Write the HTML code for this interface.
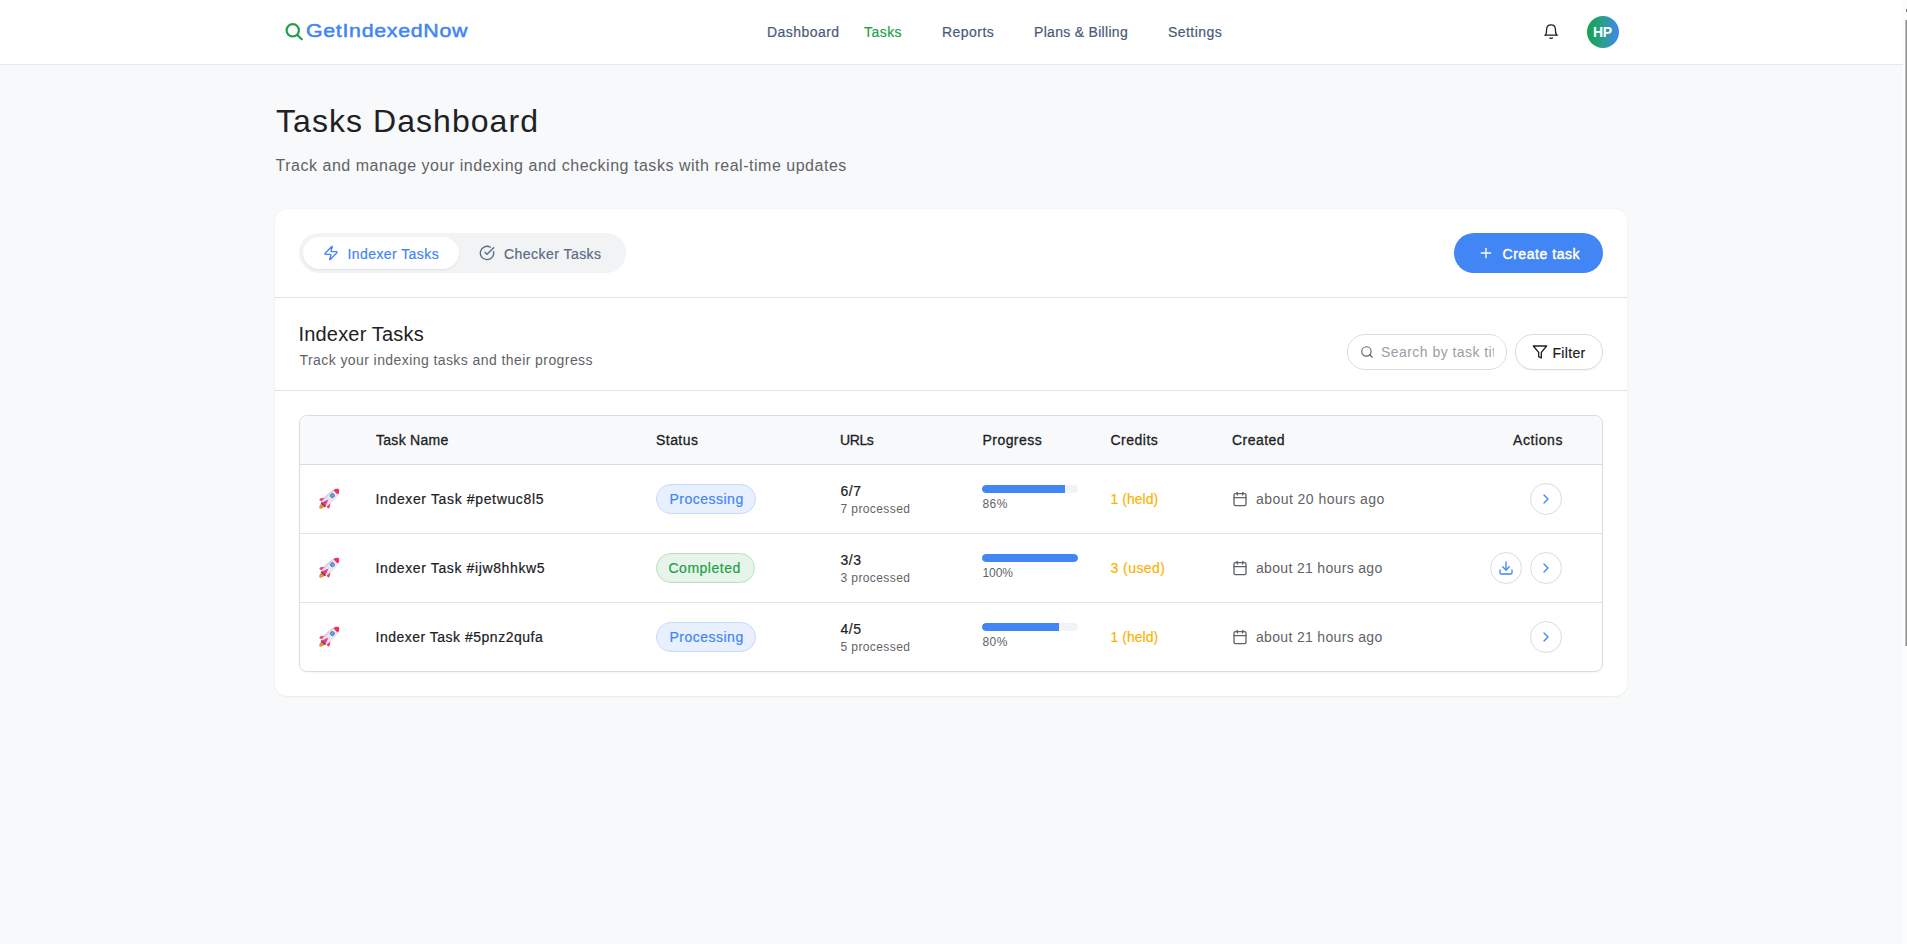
<!DOCTYPE html>
<html><head><meta charset="utf-8">
<style>
*{box-sizing:border-box;margin:0;padding:0}
html,body{width:1907px;height:944px;overflow:hidden}
body{background:#f8f9fa;font-family:"Liberation Sans",sans-serif;position:relative;color:#202124}
.a{position:absolute;white-space:nowrap;line-height:1}
svg{position:absolute;overflow:visible}
.med{-webkit-text-stroke:0.2px currentColor}
#hdr{position:absolute;left:0;top:0;width:1903px;height:65px;background:#fff;border-bottom:1px solid #e3e8ef}
.nav{font-size:14px;color:#4a5a78;top:25px;letter-spacing:0.45px}
#sbt{position:absolute;left:1903px;top:0;width:4px;height:944px;background:#fcfcfc}
#sbth{position:absolute;left:1905px;top:20px;width:2px;height:626px;background:linear-gradient(90deg,#d4d4d4,#7c7c7c)}
#sbdot{position:absolute;left:1906px;top:9px;width:1px;height:3px;background:#777}
#card{position:absolute;left:275px;top:209px;width:1352px;height:487px;background:#fff;border-radius:12px;box-shadow:0 1px 2px rgba(60,64,67,.06),0 0 0 0.5px rgba(60,64,67,.04)}
.hr{position:absolute;left:275px;width:1352px;height:1px;background:#dfe1e5}
#tabs{position:absolute;left:299px;top:233px;width:327px;height:40px;background:#f1f3f4;border-radius:20px}
#tab1{position:absolute;left:303px;top:237px;width:156px;height:32px;background:#fff;border-radius:16px;box-shadow:0 1px 2px rgba(0,0,0,.08)}
#create{position:absolute;left:1454px;top:233px;width:149px;height:40px;background:#4285f4;border-radius:20px}
.pill{position:absolute;top:334px;height:36px;border:1px solid #dadce0;border-radius:18px;background:#fff}
#tbl{position:absolute;left:299px;top:415px;width:1304px;height:257px;border:1px solid #dadce0;border-radius:8px;background:#fff;overflow:hidden;box-shadow:0 1px 2px rgba(0,0,0,.04)}
#thead{position:absolute;left:0;top:0;width:100%;height:49px;background:#f8f9fa;border-bottom:1px solid #dadce0}
.rowline{position:absolute;left:0;width:100%;height:1px;background:#e0e2e6}
.th{font-size:14px;top:433px;color:#202124;letter-spacing:0.45px;-webkit-text-stroke:0.3px #202124}
.cell{font-size:14px;color:#202124;letter-spacing:0.5px}
.sub{font-size:12px;color:#5f6368;letter-spacing:0.4px}
.badge{position:absolute;height:30px;border-radius:15px;border:1px solid}
.bar{position:absolute;left:982px;width:96px;height:8px;border-radius:4px;background:#f1f3f4;overflow:hidden}
.bar i{position:absolute;left:0;top:0;height:8px;background:#4285f4;border-radius:4px 0 0 4px}
.cred{font-size:14px;color:#fab300;letter-spacing:0.02px}
.date{font-size:14px;color:#5f6368;letter-spacing:0.45px}
.cbtn{position:absolute;width:32px;height:32px;border-radius:16px;border:1px solid #dadce0;background:#fff}
</style></head><body>
<div id="hdr"></div>
<!-- logo -->
<svg style="left:283.5px;top:22px" width="20" height="20" viewBox="0 0 24 24" fill="none" stroke="#1f9d48" stroke-width="2.6" stroke-linecap="round"><circle cx="10.5" cy="10" r="7.4"/><path d="M16 15.6 21.3 20.8"/></svg>
<div class="a" style="left:305.5px;top:21px;font-size:19px;color:#4285f4;letter-spacing:0.6px;transform:scaleX(1.125);transform-origin:0 0;-webkit-text-stroke:0.5px #4285f4">GetIndexedNow</div>
<div class="a nav med" style="left:767px">Dashboard</div>
<div class="a nav med" style="left:864px;color:#21a34a">Tasks</div>
<div class="a nav med" style="left:942px">Reports</div>
<div class="a nav med" style="left:1034px;letter-spacing:0.3px">Plans &amp; Billing</div>
<div class="a nav med" style="left:1168px">Settings</div>
<!-- bell -->
<svg style="left:1540px;top:20px" width="22" height="22" viewBox="0 0 22 22" fill="none" stroke="#202124" stroke-width="1.3" stroke-linecap="round" stroke-linejoin="round"><path d="M4.9 15.2H17.3"/><path d="M5.6 15.1C6.4 13.6 6.6 12 6.6 9.6 6.6 6.6 8.4 4.8 11.1 4.8 13.8 4.8 15.4 6.6 15.4 9.6 15.4 12 15.7 13.6 16.5 15.1"/><path d="M9.9 17.9Q11.1 18.9 12.4 17.9"/></svg>
<!-- avatar -->
<div style="position:absolute;left:1587px;top:16px;width:32px;height:32px;border-radius:16px;background:linear-gradient(90deg,#16a34a 0%,#2a9d8f 50%,#4285f4 100%)"></div>
<div class="a" style="left:1593px;top:25px;font-size:14px;font-weight:bold;color:#fff;letter-spacing:-0.3px">HP</div>

<!-- title -->
<div class="a" style="left:276px;top:105px;font-size:32px;color:#202124;letter-spacing:1.05px">Tasks Dashboard</div>
<div class="a" style="left:275.5px;top:158.3px;font-size:16px;color:#5f6368;letter-spacing:0.52px">Track and manage your indexing and checking tasks with real-time updates</div>

<div id="card"></div>
<div class="hr" style="top:297px"></div>
<div class="hr" style="top:390px"></div>

<div id="tabs"></div>
<div id="tab1"></div>
<svg style="left:323px;top:245px" width="16" height="16" viewBox="0 0 24 24" fill="none" stroke="#4285f4" stroke-width="2" stroke-linecap="round" stroke-linejoin="round"><path d="M4 14a1 1 0 0 1-.78-1.63l9.9-10.2a.5.5 0 0 1 .86.46l-1.92 6.02A1 1 0 0 0 13 10h7a1 1 0 0 1 .78 1.63l-9.9 10.2a.5.5 0 0 1-.86-.46l1.92-6.02A1 1 0 0 0 11 14z"/></svg>
<div class="a med" style="left:347.5px;top:247px;font-size:14px;color:#4285f4;letter-spacing:0.42px">Indexer Tasks</div>
<svg style="left:479px;top:245px" width="16" height="16" viewBox="0 0 24 24" fill="none" stroke="#5a6a85" stroke-width="2" stroke-linecap="round" stroke-linejoin="round"><path d="M21.801 10A10 10 0 1 1 17 3.335"/><path d="m9 11 3 3L22 4"/></svg>
<div class="a med" style="left:504px;top:247px;font-size:14px;color:#5a6a85;letter-spacing:0.46px">Checker Tasks</div>

<div id="create"></div>
<svg style="left:1478px;top:245px" width="16" height="16" viewBox="0 0 24 24" fill="none" stroke="#fff" stroke-width="2" stroke-linecap="round"><path d="M5 12h14"/><path d="M12 5v14"/></svg>
<div class="a" style="left:1502.5px;top:247px;font-size:14px;color:#fff;letter-spacing:0.55px;-webkit-text-stroke:0.45px #fff">Create task</div>

<!-- section header -->
<div class="a" style="left:298.5px;top:324px;font-size:20px;color:#202124;letter-spacing:0.18px">Indexer Tasks</div>
<div class="a" style="left:299.5px;top:353px;font-size:14px;color:#5f6368;letter-spacing:0.42px">Track your indexing tasks and their progress</div>

<div class="pill" style="left:1347px;width:160px;overflow:hidden">
<div class="a" style="left:33px;top:10px;font-size:14px;color:#9aa0a6;letter-spacing:0.45px">Search by task title</div>
<div style="position:absolute;left:146px;top:0;width:14px;height:34px;background:#fff"></div>
</div>
<svg style="left:1360px;top:345px" width="14" height="14" viewBox="0 0 24 24" fill="none" stroke="#5f6368" stroke-width="2" stroke-linecap="round"><circle cx="11" cy="11" r="8"/><path d="m21 21-4.3-4.3"/></svg>
<div class="pill" style="left:1515px;width:88px;box-shadow:0 1px 2px rgba(0,0,0,.05)"></div>
<svg style="left:1532px;top:344px" width="16" height="16" viewBox="0 0 24 24" fill="none" stroke="#202124" stroke-width="2" stroke-linecap="round" stroke-linejoin="round"><polygon points="22 3 2 3 10 12.46 10 19 14 21 14 12.46 22 3"/></svg>
<div class="a med" style="left:1552.5px;top:346px;font-size:14px;color:#202124;letter-spacing:0.32px">Filter</div>

<!-- table -->
<div id="tbl">
<div id="thead"></div>
<div class="rowline" style="top:117px"></div>
<div class="rowline" style="top:186px"></div>
</div>
<div class="a th med" style="left:376px;letter-spacing:0.28px">Task Name</div>
<div class="a th med" style="left:656px">Status</div>
<div class="a th med" style="left:840px;letter-spacing:-0.4px">URLs</div>
<div class="a th med" style="left:982.5px">Progress</div>
<div class="a th med" style="left:1110.5px;letter-spacing:0.5px">Credits</div>
<div class="a th med" style="left:1232px">Created</div>
<div class="a th med" style="left:1513px;letter-spacing:0.6px">Actions</div>

<!--ROWS-->
<svg style="left:319px;top:489px" width="20" height="20" viewBox="0 0 20 20"><g transform="rotate(45 10 10)">
<path d="M7.8 18.2C7.4 20.8 8.5 22.8 10 23.5 11.5 22.8 12.6 20.8 12.2 18.2Z" fill="#f28a2c"/>
<path d="M6.2 11.6 3.6 15.4C3.4 16 3.5 17 3.8 17.6L6.6 16.8Z" fill="#f0407a"/>
<path d="M13.8 11.6 16.4 15.4C16.6 16 16.5 17 16.2 17.6L13.4 16.8Z" fill="#f0407a"/>
<path d="M10 -3.8C12.6 -2.6 14.5 1.5 14.5 7 14.5 11.5 13.8 15.2 13 18.2H7C6.2 15.2 5.5 11.5 5.5 7 5.5 1.5 7.4 -2.6 10 -3.8Z" fill="#ebe5ef"/>
<path d="M10 -3.8C7.4 -2.6 5.5 1.5 5.5 7 5.5 11.5 6.2 15.2 7 18.2H8.4C7.6 15.2 7.1 11.5 7.1 7 7.1 1.5 8.3 -2 10 -3.8Z" fill="#d6cedd"/>
<path d="M10 -3.9C11.5 -3.3 12.6 -1.9 13.2 0.3 11.2 0.9 8.8 0.9 6.8 0.3 7.4 -1.9 8.5 -3.3 10 -3.9Z" fill="#f0304f"/>
<circle cx="10" cy="5.2" r="2" fill="#55acf7" stroke="#4a5590" stroke-width="0.7"/>
<path d="M10 10.8 12.9 18.4H7.1Z" fill="#ee3a78"/>
<path d="M7 17.6H13V18.8H7Z" fill="#3b3f8a"/>
</g></svg>
<div class="a cell med" style="left:375.5px;top:492px;letter-spacing:0.64px">Indexer Task #petwuc8l5</div>
<div class="badge" style="left:656px;top:484px;width:100px;background:#e8f0fe;border-color:#c6dafc"></div>
<div class="a med" style="left:669.5px;top:492px;font-size:14px;color:#4285f4;letter-spacing:0.49px">Processing</div>
<div class="a cell med" style="left:840.5px;top:484px">6/7</div>
<div class="a sub" style="left:840.5px;top:502.7px">7 processed</div>
<div class="bar" style="top:485px"><i style="width:83px;border-radius:4px 0 0 4px"></i></div>
<div class="a sub" style="left:982.5px;top:497.7px;letter-spacing:0.4px">86%</div>
<div class="a cred med" style="left:1110.5px;top:492px;letter-spacing:0.02px">1 (held)</div>
<svg style="left:1232px;top:491px" width="16" height="16" viewBox="0 0 24 24" fill="none" stroke="#5f6368" stroke-width="2" stroke-linecap="round" stroke-linejoin="round"><path d="M8 2v4"/><path d="M16 2v4"/><rect width="18" height="18" x="3" y="4" rx="2"/><path d="M3 10h18"/></svg>
<div class="a date" style="left:1256px;top:492px;letter-spacing:0.45px">about 20 hours ago</div>
<div class="cbtn" style="left:1530px;top:483px"></div>
<svg style="left:1538px;top:491px" width="16" height="16" viewBox="0 0 24 24" fill="none" stroke="#4285f4" stroke-width="2" stroke-linecap="round" stroke-linejoin="round"><path d="m9 18 6-6-6-6"/></svg>
<svg style="left:319px;top:558px" width="20" height="20" viewBox="0 0 20 20"><g transform="rotate(45 10 10)">
<path d="M7.8 18.2C7.4 20.8 8.5 22.8 10 23.5 11.5 22.8 12.6 20.8 12.2 18.2Z" fill="#f28a2c"/>
<path d="M6.2 11.6 3.6 15.4C3.4 16 3.5 17 3.8 17.6L6.6 16.8Z" fill="#f0407a"/>
<path d="M13.8 11.6 16.4 15.4C16.6 16 16.5 17 16.2 17.6L13.4 16.8Z" fill="#f0407a"/>
<path d="M10 -3.8C12.6 -2.6 14.5 1.5 14.5 7 14.5 11.5 13.8 15.2 13 18.2H7C6.2 15.2 5.5 11.5 5.5 7 5.5 1.5 7.4 -2.6 10 -3.8Z" fill="#ebe5ef"/>
<path d="M10 -3.8C7.4 -2.6 5.5 1.5 5.5 7 5.5 11.5 6.2 15.2 7 18.2H8.4C7.6 15.2 7.1 11.5 7.1 7 7.1 1.5 8.3 -2 10 -3.8Z" fill="#d6cedd"/>
<path d="M10 -3.9C11.5 -3.3 12.6 -1.9 13.2 0.3 11.2 0.9 8.8 0.9 6.8 0.3 7.4 -1.9 8.5 -3.3 10 -3.9Z" fill="#f0304f"/>
<circle cx="10" cy="5.2" r="2" fill="#55acf7" stroke="#4a5590" stroke-width="0.7"/>
<path d="M10 10.8 12.9 18.4H7.1Z" fill="#ee3a78"/>
<path d="M7 17.6H13V18.8H7Z" fill="#3b3f8a"/>
</g></svg>
<div class="a cell med" style="left:375.5px;top:561px;letter-spacing:0.62px">Indexer Task #ijw8hhkw5</div>
<div class="badge" style="left:656px;top:553px;width:99px;background:#e6f4ea;border-color:#b7e1c1"></div>
<div class="a med" style="left:668.5px;top:561px;font-size:14px;color:#22a046;letter-spacing:0.5px">Completed</div>
<div class="a cell med" style="left:840.5px;top:553px">3/3</div>
<div class="a sub" style="left:840.5px;top:571.7px">3 processed</div>
<div class="bar" style="top:554px"><i style="width:96px;border-radius:4px"></i></div>
<div class="a sub" style="left:982.5px;top:566.7px;letter-spacing:-0.1px">100%</div>
<div class="a cred med" style="left:1110.5px;top:561px;letter-spacing:0.45px">3 (used)</div>
<svg style="left:1232px;top:560px" width="16" height="16" viewBox="0 0 24 24" fill="none" stroke="#5f6368" stroke-width="2" stroke-linecap="round" stroke-linejoin="round"><path d="M8 2v4"/><path d="M16 2v4"/><rect width="18" height="18" x="3" y="4" rx="2"/><path d="M3 10h18"/></svg>
<div class="a date" style="left:1256px;top:561px;letter-spacing:0.33px">about 21 hours ago</div>
<div class="cbtn" style="left:1490px;top:552px"></div>
<svg style="left:1498px;top:560px" width="16" height="16" viewBox="0 0 24 24" fill="none" stroke="#4285f4" stroke-width="2" stroke-linecap="round" stroke-linejoin="round"><path d="M21 15v4a2 2 0 0 1-2 2H5a2 2 0 0 1-2-2v-4"/><polyline points="7 10 12 15 17 10"/><line x1="12" x2="12" y1="15" y2="3"/></svg>
<div class="cbtn" style="left:1530px;top:552px"></div>
<svg style="left:1538px;top:560px" width="16" height="16" viewBox="0 0 24 24" fill="none" stroke="#4285f4" stroke-width="2" stroke-linecap="round" stroke-linejoin="round"><path d="m9 18 6-6-6-6"/></svg>
<svg style="left:319px;top:627px" width="20" height="20" viewBox="0 0 20 20"><g transform="rotate(45 10 10)">
<path d="M7.8 18.2C7.4 20.8 8.5 22.8 10 23.5 11.5 22.8 12.6 20.8 12.2 18.2Z" fill="#f28a2c"/>
<path d="M6.2 11.6 3.6 15.4C3.4 16 3.5 17 3.8 17.6L6.6 16.8Z" fill="#f0407a"/>
<path d="M13.8 11.6 16.4 15.4C16.6 16 16.5 17 16.2 17.6L13.4 16.8Z" fill="#f0407a"/>
<path d="M10 -3.8C12.6 -2.6 14.5 1.5 14.5 7 14.5 11.5 13.8 15.2 13 18.2H7C6.2 15.2 5.5 11.5 5.5 7 5.5 1.5 7.4 -2.6 10 -3.8Z" fill="#ebe5ef"/>
<path d="M10 -3.8C7.4 -2.6 5.5 1.5 5.5 7 5.5 11.5 6.2 15.2 7 18.2H8.4C7.6 15.2 7.1 11.5 7.1 7 7.1 1.5 8.3 -2 10 -3.8Z" fill="#d6cedd"/>
<path d="M10 -3.9C11.5 -3.3 12.6 -1.9 13.2 0.3 11.2 0.9 8.8 0.9 6.8 0.3 7.4 -1.9 8.5 -3.3 10 -3.9Z" fill="#f0304f"/>
<circle cx="10" cy="5.2" r="2" fill="#55acf7" stroke="#4a5590" stroke-width="0.7"/>
<path d="M10 10.8 12.9 18.4H7.1Z" fill="#ee3a78"/>
<path d="M7 17.6H13V18.8H7Z" fill="#3b3f8a"/>
</g></svg>
<div class="a cell med" style="left:375.5px;top:630px;letter-spacing:0.5px">Indexer Task #5pnz2qufa</div>
<div class="badge" style="left:656px;top:622px;width:100px;background:#e8f0fe;border-color:#c6dafc"></div>
<div class="a med" style="left:669.5px;top:630px;font-size:14px;color:#4285f4;letter-spacing:0.49px">Processing</div>
<div class="a cell med" style="left:840.5px;top:622px">4/5</div>
<div class="a sub" style="left:840.5px;top:640.7px">5 processed</div>
<div class="bar" style="top:623px"><i style="width:77px;border-radius:4px 0 0 4px"></i></div>
<div class="a sub" style="left:982.5px;top:635.7px;letter-spacing:0.4px">80%</div>
<div class="a cred med" style="left:1110.5px;top:630px;letter-spacing:0.02px">1 (held)</div>
<svg style="left:1232px;top:629px" width="16" height="16" viewBox="0 0 24 24" fill="none" stroke="#5f6368" stroke-width="2" stroke-linecap="round" stroke-linejoin="round"><path d="M8 2v4"/><path d="M16 2v4"/><rect width="18" height="18" x="3" y="4" rx="2"/><path d="M3 10h18"/></svg>
<div class="a date" style="left:1256px;top:630px;letter-spacing:0.33px">about 21 hours ago</div>
<div class="cbtn" style="left:1530px;top:621px"></div>
<svg style="left:1538px;top:629px" width="16" height="16" viewBox="0 0 24 24" fill="none" stroke="#4285f4" stroke-width="2" stroke-linecap="round" stroke-linejoin="round"><path d="m9 18 6-6-6-6"/></svg>
<!--/ROWS-->
<div id="sbt"></div><div id="sbth"></div><div id="sbdot"></div>
</body></html>
